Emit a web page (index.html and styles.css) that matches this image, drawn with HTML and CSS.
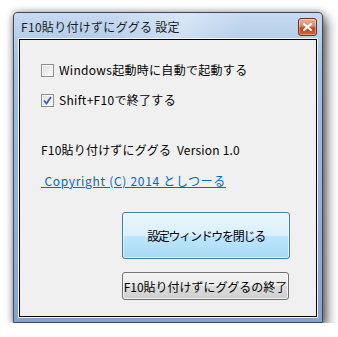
FILE: index.html
```html
<!DOCTYPE html>
<html>
  <head>
    <meta charset="UTF-8" />
    <title>F10貼り付けずにググる 設定</title>
    <link rel="stylesheet" href="styles.css">
  </head>
  <body>
    <div class="window">
      <!-- タイトルバー -->
      <div class="titlebar">
        <span class="title">F10貼り付けずにググる 設定</span>
        <span class="close-btn">
          <svg width="9" height="8" viewBox="0 0 9 8">
            <path d="M1 1 L8 7 M8 1 L1 7" stroke="#fff" stroke-width="2.2" stroke-linecap="square" />
          </svg>
        </span>
      </div>

      <!-- クライアント領域 -->
      <div class="client">
        <label class="check-row">
          <span class="check-box"></span>
          Windows起動時に自動で起動する
        </label>
        <label class="check-row second">
          <span class="check-box">
            <svg width="9" height="9" viewBox="0 0 9 9">
              <path d="M1 4.5 L3.5 7.5 L8 1" fill="none" stroke="#3a5fb8" stroke-width="1.8" />
            </svg>
          </span>
          Shift+F10で終了する
        </label>

        <div class="version">F10貼り付けずにググる&nbsp; Version 1.0</div>
        <a class="copyright" href="#">&nbsp;Copyright (C) 2014 としつーる</a>

        <button class="btn btn-default">設定ウィンドウを閉じる</button>
        <button class="btn btn-quit">F10貼り付けずにググるの終了</button>
      </div>
    </div>
  </body>
</html>
```

FILE: styles.css
```css
body {
  margin: 0;
  background: #ffffff;
  font-family: "Noto Sans CJK JP", "Noto Sans", sans-serif;
  font-size: 12px;
  color: #000;
}

.window {
  margin: 12px 0 0 13px;
  width: 310px;
  height: 311px;
  box-sizing: border-box;
  border: 1px solid #3d4a5c;
  border-radius: 4px 4px 0 0;
  background: linear-gradient(to bottom, #c6daf1 0px, #b6cdea 26px, #a4bfe2 60px, #86a3d0 100%);
  padding: 0 5px 5px 5px;
  display: flex;
  flex-direction: column;
  box-shadow: 4px 6px 12px rgba(0, 0, 0, 0.6), 0 0 7px rgba(0, 0, 0, 0.35);
}

.titlebar {
  height: 26px;
  display: flex;
  align-items: center;
  justify-content: space-between;
  padding: 0 0 0 2px;
  background: linear-gradient(100deg, rgba(255, 255, 255, 0) 30%, rgba(255, 255, 255, 0.35) 55%, rgba(255, 255, 255, 0) 75%);
}

.title {
  font-size: 12px;
  color: #1b1b1b;
  letter-spacing: 0.3px;
}

.close-btn {
  width: 19px;
  height: 18px;
  margin-top: 1px;
  box-sizing: border-box;
  border: 1px solid #6b3426;
  border-radius: 3px;
  background: linear-gradient(to bottom, #e9ad9c 0%, #da8a72 45%, #c4451f 55%, #d5622f 100%);
  display: flex;
  align-items: center;
  justify-content: center;
  box-shadow: inset 0 0 0 1px rgba(255, 255, 255, 0.35);
}

.client {
  flex: 1;
  background: #f0f0f0;
  border: 1px solid #000;
  box-shadow: 0 0 0 1px #f4f8fc;
  padding: 22px 0 0 21px;
  display: flex;
  flex-direction: column;
  align-items: flex-start;
}

.check-row {
  display: flex;
  align-items: center;
  line-height: 16px;
  height: 16px;
  letter-spacing: 0.3px;
}

.check-row.second {
  margin-top: 14px;
}

.check-box {
  width: 13px;
  height: 13px;
  box-sizing: border-box;
  border: 1px solid #8e8f8f;
  background: linear-gradient(135deg, #dcdcdc 0%, #f4f4f4 70%, #ffffff 100%);
  box-shadow: inset 0 0 0 1px #f6f6f6;
  margin-right: 5px;
  display: flex;
  align-items: center;
  justify-content: center;
}

.version {
  margin-top: 34px;
  line-height: 16px;
  letter-spacing: 0.2px;
}

.copyright {
  margin-top: 15px;
  line-height: 16px;
  color: #0066cc;
  text-decoration: underline;
  letter-spacing: 0.7px;
}

.btn {
  font-family: "Noto Sans CJK JP", "Noto Sans", sans-serif;
  font-size: 12px;
  color: #000;
  margin-left: 81px;
  border-radius: 3px;
  padding: 0;
}

.btn-default {
  margin-top: 23px;
  width: 168px;
  height: 47px;
  border: 1px solid #3c7fb1;
  background: linear-gradient(to bottom, #eaf6fd 0%, #d9f0fc 50%, #bee6fd 51%, #a7d9f5 100%);
  box-shadow: inset 0 0 0 1px rgba(255, 255, 255, 0.6);
  letter-spacing: -1.3px;
}

.btn-quit {
  margin-top: 13px;
  width: 167px;
  height: 28px;
  border: 1px solid #707070;
  background: linear-gradient(to bottom, #f2f2f2 0%, #ebebeb 50%, #dddddd 51%, #cfcfcf 100%);
  box-shadow: inset 0 0 0 1px rgba(255, 255, 255, 0.7);
}
```
